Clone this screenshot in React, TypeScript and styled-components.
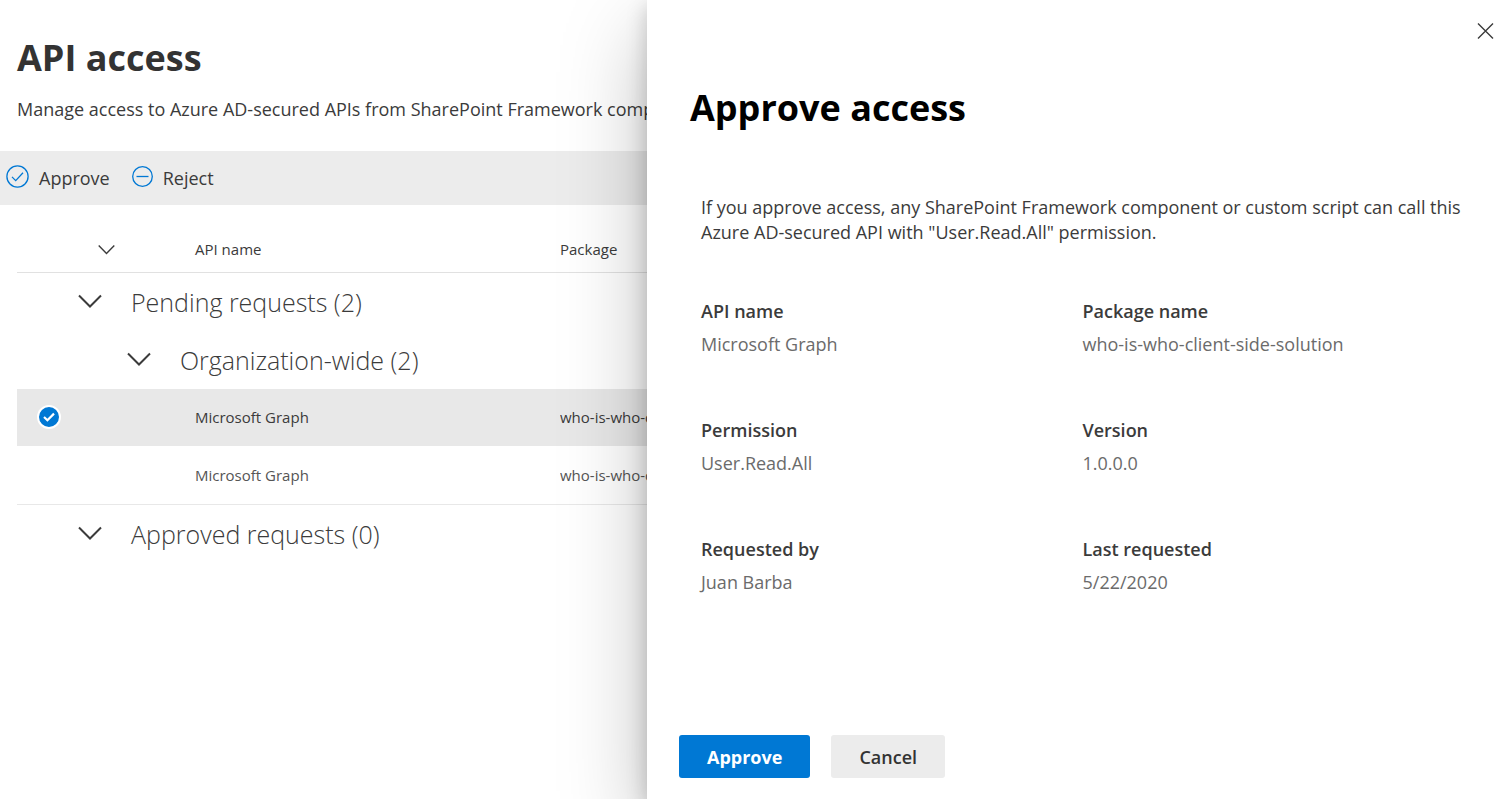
import React, { useState } from 'react';
import styled, { createGlobalStyle } from 'styled-components';

const GlobalStyle = createGlobalStyle`
  *, *::before, *::after { box-sizing: border-box; }
  body {
    margin: 0;
    background: #fff;
    color: #3b3b3b;
    font-family: 'Segoe UI', 'Open Sans', 'Noto Sans', sans-serif;
    font-size: 18px;
    line-height: 25px;
  }
  button { font: inherit; color: inherit; cursor: pointer; }
`;

const Shell = styled.div`
  display: flex;
  min-height: 100vh;
  overflow: hidden;
`;

const Page = styled.main`
  flex: 1;
  min-width: 0;
  overflow: hidden;
  white-space: nowrap;
`;

const PageHeader = styled.header`
  padding: 34px 17px 29px;
`;

const PageTitle = styled.h1`
  margin: 0 0 15px;
  color: #333;
  font-size: 36px;
  line-height: 48px;
  font-weight: 700;
`;

const Lead = styled.p`
  margin: 0;
`;

const Toolbar = styled.div`
  display: flex;
  align-items: center;
  gap: 22px;
  height: 54px;
  padding: 0 6px;
  background: #ececec;
`;

const CommandButton = styled.button`
  display: flex;
  align-items: center;
  gap: 10px;
  padding: 0;
  border: 0;
  background: none;
  svg {
    margin-bottom: 3px;
    color: #0078d4;
  }
`;

const RequestTable = styled.table`
  width: calc(100% - 17px);
  margin-left: 17px;
  table-layout: fixed;
  border-collapse: collapse;
  font-size: 15px;
`;

const CheckColumn = styled.col`
  width: 178px;
`;

const NameColumn = styled.col`
  width: 365px;
`;

const HeadRow = styled.tr`
  height: 67px;
  border-bottom: 1px solid #e1e1e1;
`;

const HeadCell = styled.th`
  padding: 23px 0 0;
  font-weight: 400;
  text-align: left;
`;

const SortButton = styled.button`
  display: flex;
  margin-left: 81px;
  padding: 0;
  border: 0;
  background: none;
`;

const Row = styled.tr<{ $selected?: boolean; $last?: boolean }>`
  height: 58px;
  background: ${(p) => (p.$selected ? '#e8e8e8' : 'transparent')};
  border-bottom: 1px solid ${(p) => (p.$last ? '#e8e8e8' : '#fff')};
`;

const Cell = styled.td<{ $muted?: boolean }>`
  padding: 0;
  overflow: hidden;
  color: ${(p) => (p.$muted ? '#555' : '#3b3b3b')};
`;

const RowCheck = styled.input`
  display: block;
  appearance: none;
  width: 24px;
  height: 24px;
  margin: 0 0 0 20px;
  border: 2px solid transparent;
  border-radius: 50%;
  &:checked {
    border-color: #fff;
    background: #0078d4;
  }
`;

const CheckWrap = styled.label`
  display: grid;
  width: 44px;
  > * { grid-area: 1 / 1; }
  svg {
    margin: 6px 0 0 26px;
    color: #fff;
    pointer-events: none;
  }
`;

const GroupButton = styled.button<{ $level: number }>`
  display: flex;
  align-items: center;
  gap: 29px;
  height: 57px;
  padding: 0 0 0 ${(p) => 12 + p.$level * 49}px;
  border: 0;
  background: none;
  font-size: 25px;
  line-height: 36px;
  font-weight: 300;
`;

const GroupLabel = styled.span`
  padding-top: 2px;
`;

const Panel = styled.aside`
  position: relative;
  display: flex;
  flex-direction: column;
  width: min(863px, 90vw);
  min-height: 100vh;
  padding: 18px 32px 21px;
  background: #fff;
  box-shadow: 0 32px 80px rgba(0, 0, 0, 0.26), 0 6px 20px rgba(0, 0, 0, 0.2);
`;

const CloseButton = styled.button`
  display: flex;
  align-self: flex-end;
  margin-right: -16px;
  padding: 0;
  border: 0;
  background: none;
`;

const PanelTitle = styled.h2`
  margin: 40px 11px 63px;
  color: #000;
  font-size: 36px;
  line-height: 48px;
  font-weight: 700;
`;

const PanelBody = styled.div`
  flex: 1;
  padding: 0 14px 0 22px;
`;

const Message = styled.p`
  margin: 0 0 54px;
`;

const Details = styled.dl`
  display: grid;
  grid-template-columns: 1fr 1fr;
  row-gap: 61px;
  margin: 0;
`;

const Detail = styled.div``;

const Term = styled.dt`
  margin-bottom: 8px;
  font-weight: 600;
`;

const Value = styled.dd`
  margin: 0;
  color: #6b6b6b;
`;

const PanelFooter = styled.footer`
  display: flex;
  gap: 21px;
`;

const ActionButton = styled.button<{ $primary?: boolean }>`
  height: 43px;
  padding: 1px 28px 0;
  border: 0;
  border-radius: 3px;
  background: ${(p) => (p.$primary ? '#0078d4' : '#ececec')};
  color: ${(p) => (p.$primary ? '#fff' : '#333')};
  font-weight: ${(p) => (p.$primary ? 700 : 600)};
`;

const Chevron = ({ size }: { size: number }) => (
  <svg width={size} height={size} viewBox="0 0 24 24" fill="none" stroke="currentColor" strokeWidth="2" aria-hidden="true">
    <path d="M1 6.5L12 17.5L23 6.5" />
  </svg>
);

const ApproveIcon = () => (
  <svg width="23" height="23" viewBox="0 0 23 23" fill="none" stroke="currentColor" strokeWidth="1.3" aria-hidden="true">
    <circle cx="11.5" cy="11.5" r="10.6" />
    <path d="M6 11.9L9.7 15.6L17 7.8" />
  </svg>
);

const RejectIcon = () => (
  <svg width="21" height="21" viewBox="0 0 21 21" fill="none" stroke="currentColor" strokeWidth="1.3" aria-hidden="true">
    <circle cx="10.5" cy="10.5" r="9.8" />
    <path d="M4.5 10.5H16.5" />
  </svg>
);

const TickIcon = () => (
  <svg width="12" height="12" viewBox="0 0 12 12" fill="none" stroke="currentColor" strokeWidth="2.2" aria-hidden="true">
    <path d="M1 6L4.4 9.2L11 2.6" />
  </svg>
);

const CloseIcon = () => (
  <svg width="17" height="26" viewBox="0 0 17 26" fill="none" stroke="currentColor" strokeWidth="1.4" aria-hidden="true">
    <path d="M1 5.5L16 20.5M16 5.5L1 20.5" />
  </svg>
);

const details = [
  ['API name', 'Microsoft Graph'],
  ['Package name', 'who-is-who-client-side-solution'],
  ['Permission', 'User.Read.All'],
  ['Version', '1.0.0.0'],
  ['Requested by', 'Juan Barba'],
  ['Last requested', '5/22/2020'],
];

const requests = [
  { id: 1, api: 'Microsoft Graph', pkg: 'who-is-who-client-side-solution' },
  { id: 2, api: 'Microsoft Graph', pkg: 'who-is-who-client-side-solution' },
];

const Group = ({ level, label }: { level: number; label: string }) => (
  <Row>
    <Cell colSpan={3}>
      <GroupButton type="button" $level={level + 1} aria-expanded="true">
        <Chevron size={24} />
        <GroupLabel>{label}</GroupLabel>
      </GroupButton>
    </Cell>
  </Row>
);

export default function App() {
  const [selected, setSelected] = useState(1);

  return (
    <>
      <GlobalStyle />
      <Shell>
        <Page>
          <PageHeader>
            <PageTitle>API access</PageTitle>
            <Lead>Manage access to Azure AD-secured APIs from SharePoint Framework components</Lead>
          </PageHeader>
          <Toolbar role="toolbar">
            <CommandButton type="button"><ApproveIcon />Approve</CommandButton>
            <CommandButton type="button"><RejectIcon />Reject</CommandButton>
          </Toolbar>
          <RequestTable>
            <colgroup>
              <CheckColumn />
              <NameColumn />
              <col />
            </colgroup>
            <thead>
              <HeadRow>
                <HeadCell>
                  <SortButton type="button" aria-label="Expand or collapse all groups"><Chevron size={17} /></SortButton>
                </HeadCell>
                <HeadCell>API name</HeadCell>
                <HeadCell>Package</HeadCell>
              </HeadRow>
            </thead>
            <tbody>
              <Group level={0} label="Pending requests (2)" />
              <Group level={1} label="Organization-wide (2)" />
              {requests.map((r, i) => (
                <Row key={r.id} $selected={r.id === selected} $last={i === requests.length - 1}>
                  <Cell>
                    <CheckWrap>
                      <RowCheck
                        type="checkbox"
                        aria-label={`Select ${r.api}`}
                        checked={r.id === selected}
                        onChange={() => setSelected(r.id)}
                      />
                      {r.id === selected && <TickIcon />}
                    </CheckWrap>
                  </Cell>
                  <Cell $muted={r.id !== selected}>{r.api}</Cell>
                  <Cell $muted={r.id !== selected}>{r.pkg}</Cell>
                </Row>
              ))}
              <Group level={0} label="Approved requests (0)" />
            </tbody>
          </RequestTable>
        </Page>
        <Panel role="dialog" aria-labelledby="panel-title">
          <CloseButton type="button" aria-label="Close"><CloseIcon /></CloseButton>
          <PanelTitle id="panel-title">Approve access</PanelTitle>
          <PanelBody>
            <Message>
              If you approve access, any SharePoint Framework component or custom script can call this Azure AD-secured
              API with "User.Read.All" permission.
            </Message>
            <Details>
              {details.map(([term, value]) => (
                <Detail key={term}>
                  <Term>{term}</Term>
                  <Value>{value}</Value>
                </Detail>
              ))}
            </Details>
          </PanelBody>
          <PanelFooter>
            <ActionButton type="button" $primary>Approve</ActionButton>
            <ActionButton type="button">Cancel</ActionButton>
          </PanelFooter>
        </Panel>
      </Shell>
    </>
  );
}
